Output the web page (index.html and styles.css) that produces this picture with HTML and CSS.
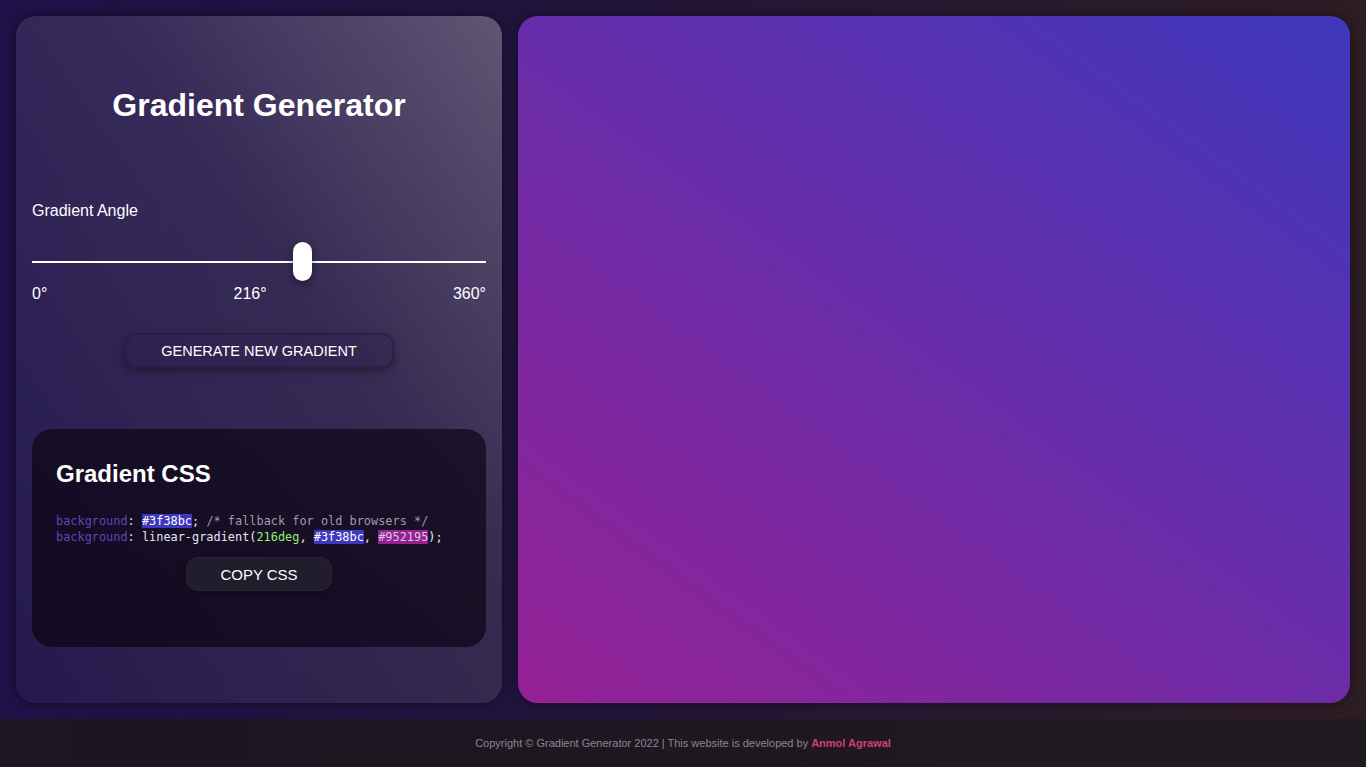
FILE: index.html
```html
<!DOCTYPE html>
<html lang="en">
<head>
<meta charset="utf-8">
<title>Gradient Generator</title>
<link rel="stylesheet" href="styles.css">
</head>
<body>
<main class="main">
  <section class="panel">
    <h1 class="title">Gradient Generator</h1>
    <label class="angle-label" for="angle">Gradient Angle</label>
    <input class="range" id="angle" type="range" min="0" max="360" value="216">
    <div class="ticks"><span>0°</span><span>216°</span><span>360°</span></div>
    <div class="center"><button class="btn btn-gen">GENERATE NEW GRADIENT</button></div>
    <div class="code-card">
      <h2 class="code-title">Gradient CSS</h2>
      <pre class="code"><span class="prop">background</span>: <span class="hl-a">#3f38bc</span>; <span class="cmt">/* fallback for old browsers */</span>
<span class="prop">background</span>: linear-gradient(<span class="num">216deg</span>, <span class="hl-a">#3f38bc</span>, <span class="hl-b">#952195</span>);</pre>
      <div class="center"><button class="btn btn-copy">COPY CSS</button></div>
    </div>
  </section>
  <section class="preview"></section>
</main>
<footer class="footer">Copyright © Gradient Generator 2022 | This website is developed by <span class="author">Anmol Agrawal</span></footer>
</body>
</html>
```
FILE: styles.css
```css
* { box-sizing: border-box; }
html, body { margin: 0; padding: 0; }
body {
  width: 1366px;
  height: 767px;
  overflow: hidden;
  font-family: "Liberation Sans", Arial, sans-serif;
  color: #fff;
  background: linear-gradient(to right, #1e1248 0%, #22143d 40%, #2e1d24 100%);
  display: flex;
  flex-direction: column;
}
.main {
  height: 719px;
  padding: 16px;
  display: flex;
  gap: 16px;
}
.panel {
  width: 486px;
  flex: none;
  border-radius: 20px;
  padding: 16px;
  background: linear-gradient(to bottom left, rgba(255,255,255,0.28) 0%, rgba(255,255,255,0.1) 40%, rgba(255,255,255,0.03) 100%);
  box-shadow: 0 0 12px rgba(0,0,0,0.45);
  display: flex;
  flex-direction: column;
}
.title {
  margin: 55px 0 0;
  text-align: center;
  font-size: 32px;
  font-weight: 700;
  line-height: 37px;
}
.angle-label {
  display: block;
  margin-top: 78px;
  font-size: 16px;
  line-height: 18px;
}
.range {
  -webkit-appearance: none;
  appearance: none;
  display: block;
  width: 454px;
  height: 40px;
  margin: 22px 0 0;
  background: transparent;
}
.range::-webkit-slider-runnable-track {
  height: 2px;
  background: #fff;
}
.range::-webkit-slider-thumb {
  -webkit-appearance: none;
  width: 19px;
  height: 39px;
  margin-top: -19px;
  border-radius: 10px;
  background: #fff;
  box-shadow: 0 3px 8px rgba(0,0,0,0.45);
}
.ticks {
  display: flex;
  justify-content: space-between;
  margin-top: 3px;
  font-size: 16px;
  line-height: 18px;
}
.center { display: flex; justify-content: center; }
.btn {
  font-family: "Liberation Sans", Arial, sans-serif;
  color: #fff;
  border-radius: 12px;
  cursor: pointer;
}
.btn-gen {
  margin-top: 30px;
  width: 270px;
  height: 35px;
  font-size: 14.5px;
  background: rgba(40,28,70,0.25);
  border: 2px solid rgba(30,20,45,0.35);
  box-shadow: 0 3px 8px rgba(0,0,0,0.35);
}
.code-card {
  margin-top: 61px;
  height: 218px;
  border-radius: 20px;
  padding: 24px 24px 0;
  background: linear-gradient(to bottom left, rgba(18,10,28,0.78), rgba(12,6,22,0.78));
}
.code-title {
  margin: 7px 0 0;
  font-size: 24px;
  font-weight: 700;
  line-height: 28px;
}
.code {
  margin: 25px 0 0;
  font-family: "DejaVu Sans Mono", "Liberation Mono", monospace;
  font-size: 11.9px;
  line-height: 16px;
  color: #e8e6ee;
  white-space: pre;
}
.prop { color: #5b48b4; }
.cmt { color: #a09ca8; }
.num { color: #98f06a; }
.hl-a { background: #3f38bc; color: #fff; }
.hl-b { background: #952195; color: #d8c8d8; }
.btn-copy {
  margin-top: 12px;
  width: 146px;
  height: 34px;
  font-size: 15px;
  background: #221d2c;
  border: 1px solid rgba(255,255,255,0.04);
  box-shadow: 0 2px 6px rgba(0,0,0,0.3);
}
.preview {
  flex: 1;
  border-radius: 20px;
  background: linear-gradient(216deg, #3f38bc, #952195);
  box-shadow: 0 0 12px rgba(0,0,0,0.45);
}
.footer {
  height: 48px;
  flex: none;
  display: flex;
  align-items: center;
  justify-content: center;
  font-size: 11px;
  color: #8c8690;
  background: linear-gradient(to right, #1c1522, #211a20);
}
.author { color: #d2406c; font-weight: 700; margin-left: 3px; }
```
